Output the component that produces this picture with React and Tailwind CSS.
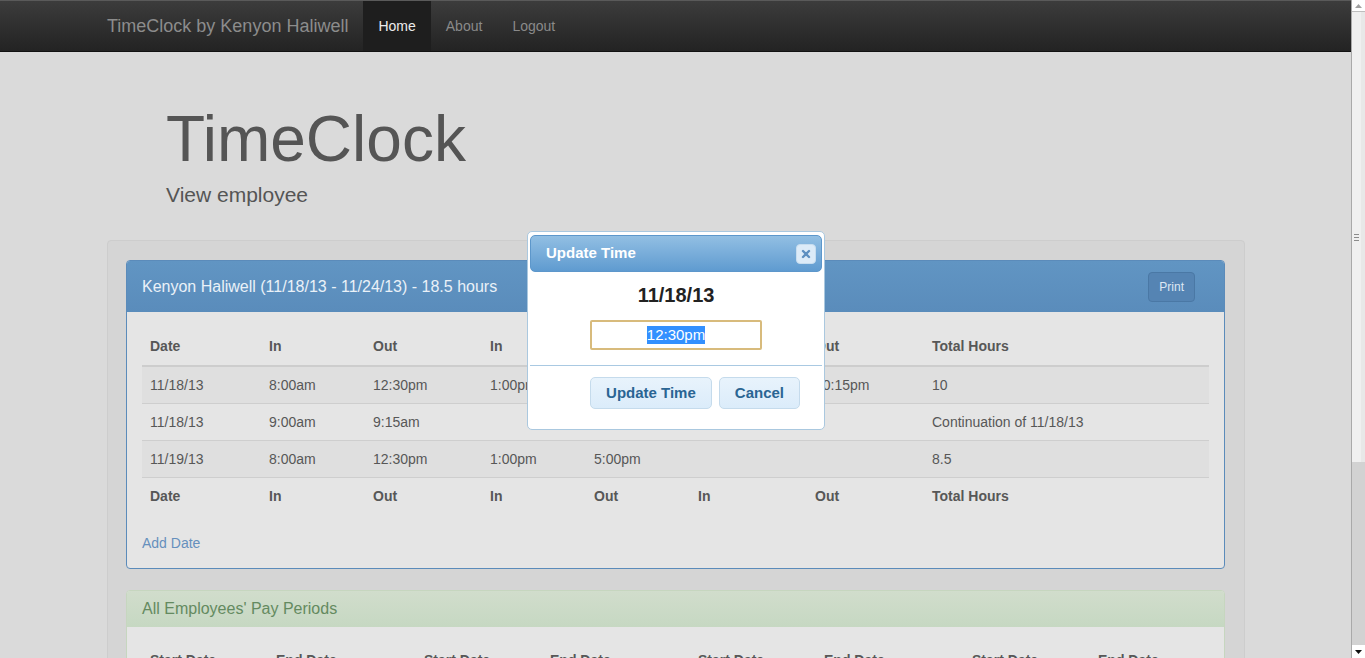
import React from "react";

const font = { fontFamily: '"Liberation Sans", Arial, sans-serif' };

const rows = [
  ["11/18/13", "8:00am", "12:30pm", "1:00pm", "5:00pm", "5:30pm", "10:15pm", "10"],
  ["11/18/13", "9:00am", "9:15am", "", "", "", "", "Continuation of 11/18/13"],
  ["11/19/13", "8:00am", "12:30pm", "1:00pm", "5:00pm", "", "", "8.5"],
];

const heads = ["Date", "In", "Out", "In", "Out", "In", "Out", "Total Hours"];
const widths = ["w-[119px]", "w-[104px]", "w-[117px]", "w-[104px]", "w-[104px]", "w-[117px]", "w-[117px]", ""];
const payWidths = ["w-[126px]", "w-[148px]", "w-[126px]", "w-[148px]", "w-[126px]", "w-[148px]", "w-[126px]", ""];

function Navbar() {
  return (
    <div className="h-[52px] bg-gradient-to-b from-[#3c3c3c] to-[#232323] border-t border-[#5a5a5a] border-b border-b-[#121212] flex pl-[92px]">
      <div className="px-[15px] text-[18px] leading-[50px] text-[#8c8c8c]">TimeClock by Kenyon Haliwell</div>
      <div className="px-[15px] text-[14px] leading-[50px] text-[#ececec] bg-[#1e1e1e]">Home</div>
      <div className="px-[15px] text-[14px] leading-[50px] text-[#8a8a8a]">About</div>
      <div className="px-[15px] text-[14px] leading-[50px] text-[#8a8a8a]">Logout</div>
    </div>
  );
}

function TimeTable() {
  return (
    <table className="w-full table-fixed border-collapse text-[14px] text-[#575757] mb-[19px]">
      <colgroup>
        {widths.map((w, i) => (
          <col key={i} className={w} />
        ))}
      </colgroup>
      <thead>
        <tr>
          {heads.map((h, i) => (
            <th key={i} className="text-left font-bold px-[8px] pt-[9px] pb-[9px] leading-[20px] border-b-2 border-[#cdcdcd]">
              {h}
            </th>
          ))}
        </tr>
      </thead>
      <tbody>
        {rows.map((r, i) => (
          <tr key={i} className={i % 2 === 0 ? "bg-[#dfdfdf]" : ""}>
            {r.map((c, j) => (
              <td key={j} className="px-[8px] py-[8px] leading-[20px] border-t border-[#cecece] whitespace-nowrap">
                {c}
              </td>
            ))}
          </tr>
        ))}
      </tbody>
      <tfoot>
        <tr>
          {heads.map((h, i) => (
            <th key={i} className="text-left font-bold px-[8px] py-[8px] leading-[20px] border-t border-[#cecece]">
              {h}
            </th>
          ))}
        </tr>
      </tfoot>
    </table>
  );
}

function Dialog() {
  return (
    <div className="absolute left-[527px] top-[231px] w-[298px] h-[199px] bg-white border border-[#aac8df] rounded-[5px] p-[2px]">
      <div className="mt-px h-[37px] rounded-[5px] border border-[#5d97cb] bg-gradient-to-b from-[#92bfe3] to-[#5f9bd0] flex items-center justify-between pl-[15px] pr-[5px]">
        <span className="text-[15px] font-bold text-white">Update Time</span>
        <span className="w-[20px] h-[20px] rounded-[4px] bg-[#dcebf8] border border-[#c7ddef] flex items-center justify-center">
          <svg width="10" height="10" viewBox="0 0 10 10">
            <path d="M2 2 L8 8 M8 2 L2 8" stroke="#5d8fc0" strokeWidth="2.4" strokeLinecap="round" />
          </svg>
        </span>
      </div>
      <div className="mt-[11px] text-center text-[20px] leading-[24px] font-bold text-[#222]">11/18/13</div>
      <div className="mt-[13px] mx-auto w-[172px] h-[30px] border-2 border-[#d8bb7c] rounded-[2px] flex items-center justify-center text-[15px]">
        <span className="bg-[#3390ff] text-white leading-[18px]">12:30pm</span>
      </div>
      <div className="mt-[15px] border-t border-[#a9c9e2]" />
      <div className="mt-[11px] flex justify-end gap-[7px] pr-[22px]">
        <div className="h-[32px] px-[15px] rounded-[5px] border border-[#c5dbec] bg-gradient-to-b from-[#e8f3fc] to-[#dbecfa] text-[15px] font-bold text-[#2a6593] flex items-center">
          Update Time
        </div>
        <div className="h-[32px] px-[15px] rounded-[5px] border border-[#c5dbec] bg-gradient-to-b from-[#e8f3fc] to-[#dbecfa] text-[15px] font-bold text-[#2a6593] flex items-center">
          Cancel
        </div>
      </div>
    </div>
  );
}

function Scrollbar() {
  return (
    <div className="w-[14px] h-[658px] flex flex-col bg-[#d2d2d2] border-l border-[#a9a9a9]">
      <div className="h-[12px] bg-white flex items-center justify-center border-b border-[#bdbdbd]">
        <svg width="7" height="4" viewBox="0 0 7 4">
          <path d="M0 4 L3.5 0 L7 4 Z" fill="#a0a0a0" />
        </svg>
      </div>
      <div className="h-[450px] bg-[#f0f0f0] border-r-4 border-[#e8e8e8] flex items-center justify-center">
        <div className="flex flex-col gap-[2px]">
          <div className="w-[5px] h-px bg-[#8c8c8c]" />
          <div className="w-[5px] h-px bg-[#8c8c8c]" />
          <div className="w-[5px] h-px bg-[#8c8c8c]" />
        </div>
      </div>
      <div className="flex-1" />
      <div className="h-[13px] bg-white flex items-center justify-center">
        <svg width="7" height="4" viewBox="0 0 7 4">
          <path d="M0 0 L7 0 L3.5 4 Z" fill="#111" />
        </svg>
      </div>
    </div>
  );
}

export default function App() {
  return (
    <div className="relative flex h-[658px] overflow-hidden bg-[#dadada]" style={font}>
      <div className="w-[1351px] h-[658px] overflow-hidden">
        <Navbar />
        <div className="ml-[107px] w-[1138px]">
          <div className="pt-[52px] pl-[59px] text-[#555]">
            <h1 className="text-[64px] leading-[70px]">TimeClock</h1>
            <p className="mt-[6px] text-[21px] leading-[29px]">View employee</p>
          </div>
          <div className="mt-[31px] border border-[#cdcdcd] bg-[#d5d5d5] rounded-[4px] pt-[19px] pl-[18px] pr-[19px] pb-[40px]">
            <div className="border border-[#5b8bba] rounded-[4px] bg-[#e5e5e5]">
              <div className="h-[51px] rounded-t-[3px] bg-gradient-to-b from-[#6195c3] to-[#5a8cbb] flex items-center justify-between pl-[15px] pr-[29px]">
                <span className="text-[16px] text-[#eaf1f8]">Kenyon Haliwell (11/18/13 - 11/24/13) - 18.5 hours</span>
                <span className="h-[30px] px-[10px] rounded-[4px] bg-[#5584b3] border border-[#4a78a5] text-[12px] text-[#dde8f3] flex items-center">
                  Print
                </span>
              </div>
              <div className="p-[15px]">
                <TimeTable />
                <div className="text-[14px] leading-[20px] text-[#6690bd]">Add Date</div>
              </div>
            </div>
            <div className="mt-[21px] border border-[#c6d6bf] rounded-[4px] bg-[#e5e5e5]">
              <div className="h-[36px] rounded-t-[3px] bg-gradient-to-b from-[#d1ddcc] to-[#c6d8c2] flex items-center pl-[15px] text-[16px] text-[#648a60]">
                All Employees' Pay Periods
              </div>
              <div className="p-[15px]">
                <table className="w-full table-fixed border-collapse text-[14px] text-[#575757]">
                  <colgroup>
                    {payWidths.map((w, i) => (
                      <col key={i} className={w} />
                    ))}
                  </colgroup>
                  <thead>
                    <tr>
                      {["Start Date", "End Date", "Start Date", "End Date", "Start Date", "End Date", "Start Date", "End Date"].map((h, i) => (
                        <th key={i} className="text-left font-bold px-[8px] py-[8px] leading-[20px] border-b-2 border-[#cdcdcd] whitespace-nowrap">
                          {h}
                        </th>
                      ))}
                    </tr>
                  </thead>
                </table>
              </div>
            </div>
          </div>
        </div>
      </div>
      <Scrollbar />
      <Dialog />
    </div>
  );
}
